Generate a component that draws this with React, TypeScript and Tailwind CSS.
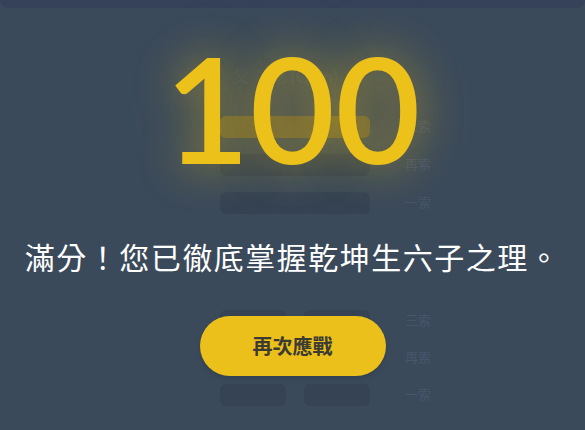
import React from 'react';

const rowsTop = [
  { label: '三索', split: false, tint: true },
  { label: '再索', split: false, tint: false },
  { label: '一索', split: false, tint: false },
];

const rowsBottom = [
  { label: '三索', split: true },
  { label: '再索', split: false },
  { label: '一索', split: true },
];

const Bar: React.FC<{ split: boolean; tint?: boolean }> = ({ split, tint }) =>
  split ? (
    <div className="flex w-[150px] gap-[18px]">
      <div className="h-[22px] flex-1 rounded-md bg-[#354355]" />
      <div className="h-[22px] flex-1 rounded-md bg-[#354355]" />
    </div>
  ) : (
    <div className={`h-[22px] w-[150px] rounded-md ${tint ? 'bg-[#66603f]' : 'bg-[#354355]'}`} />
  );

export default function App() {
  return (
    <div className="relative h-[430px] w-full overflow-hidden bg-[#3b4a5b] font-['Lato','Noto_Sans_CJK_TC',sans-serif]">
      {/* page behind the overlay */}
      <div className="flex flex-col">
        <div className="h-[8px] rounded-b-lg bg-[#35425a]" />
        <div className="ml-[232px] mt-[54px] text-lg text-[#43505f]">父：乾 (Qian)</div>
        <div className="mt-[26px] flex flex-col gap-[16px]">
          {rowsTop.map((r, i) => (
            <div key={i} className="flex items-center">
              <div className="ml-[220px]">
                <Bar split={r.split} tint={r.tint} />
              </div>
              <span className="ml-[35px] text-[13px] text-[#48556a]">{r.label}</span>
            </div>
          ))}
        </div>
        <div className="mt-[96px] flex flex-col gap-[15px]">
          {rowsBottom.map((r, i) => (
            <div key={i} className="flex items-center">
              <div className="ml-[220px]">
                <Bar split={r.split} />
              </div>
              <span className="ml-[35px] text-[13px] text-[#48556a]">{r.label}</span>
            </div>
          ))}
        </div>
      </div>

      {/* result overlay */}
      <div className="absolute inset-0 flex flex-col items-center pt-[34px]">
        <div className="text-[147px] font-semibold leading-none text-[#ecc11a] [text-shadow:0_0_40px_rgba(236,193,26,0.5),0_0_80px_rgba(236,193,26,0.2)]">
          100
        </div>
        <p className="mt-[58px] text-3xl tracking-wider text-white">滿分！您已徹底掌握乾坤生六子之理。</p>
        <button className="mt-[41px] rounded-full bg-[#ebc01a] px-[53px] py-4 text-xl font-bold text-[#3b3b33] shadow-md">
          再次應戰
        </button>
      </div>
    </div>
  );
}
